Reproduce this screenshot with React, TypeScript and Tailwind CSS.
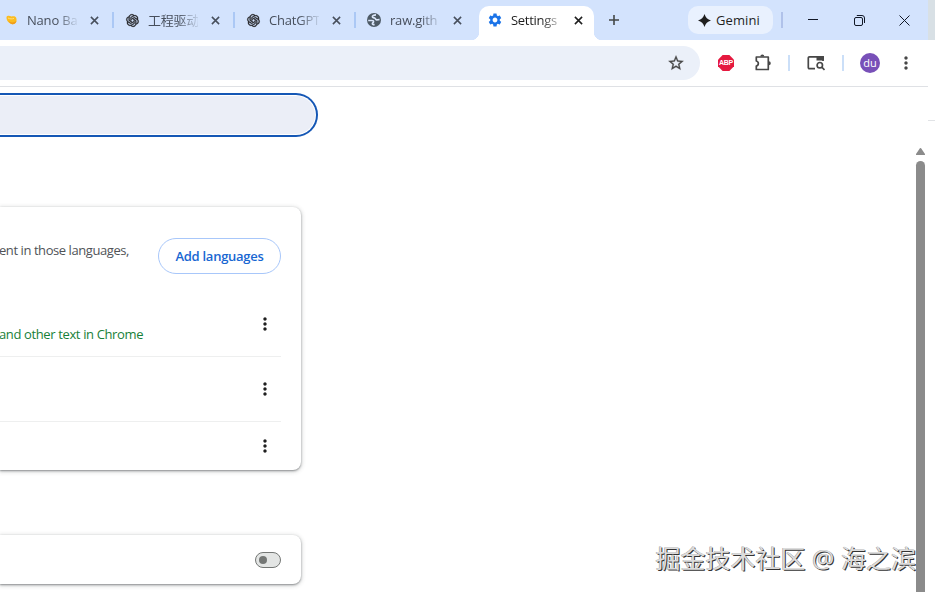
import type { ReactNode } from 'react';
import { MdMoreVert, MdSettings, MdStarOutline } from 'react-icons/md';
import { RiOpenaiFill } from 'react-icons/ri';

interface TabProps {
  icon: ReactNode;
  title: string;
  separator?: boolean;
}

function CloseIcon({ className }: { className?: string }) {
  return (
    <svg viewBox="0 0 10 10" className={className} fill="none" stroke="currentColor" strokeWidth="1.7">
      <path d="M1 1l8 8M9 1L1 9" />
    </svg>
  );
}

function BananaIcon() {
  return (
    <svg viewBox="0 0 14 14" className="w-3.5 h-3.5">
      <path d="M2.500 4C3.800 2 5.800 3 7.500 3.600 9 3.200 12 2.800 12.500 6c.4 3.200-1.500 5.500-4 5.200C5.500 10.800 2.200 8 2.500 4z" fill="#fbbc1f" />
      <path d="M4.500 7.800c2 2 5.200 2.300 8 0-.4 2.400-2 3.600-4.200 3.400C6.500 10.800 5.200 9.600 4.500 7.800z" fill="#f09c1b" />
      <path d="M4 5c2 1 4 1.200 6 .3" stroke="#ffe08a" strokeWidth=".9" fill="none" />
    </svg>
  );
}

function GlobeIcon() {
  return (
    <svg viewBox="0 0 14 14" className="w-3.5 h-3.5">
      <circle cx="7" cy="7" r="7" fill="#4d5a66" />
      <path
        d="M9 1.800c-2.200.1-3.800.8-3.600 2 .2 1.100 1.600.9 2.400 1.300.8.500.6 1.600 1.800 1.700 1.100.1 1.700-.2 2.900-.1"
        fill="none"
        stroke="#dbe7fb"
        strokeWidth="1.700"
      />
      <path d="M1.200 7.500h3.600c1.400 0 2 .7 1.600 1.600-.3.600-1 .6-1 1.300 0 .8.900 1.300 2.200 1.300" fill="none" stroke="#dbe7fb" strokeWidth="1.700" />
    </svg>
  );
}

function OpenAiIcon() {
  return <RiOpenaiFill className="w-[15px] h-[15px]" stroke="currentColor" strokeWidth="0.6" />;
}

function SidePanelSearchIcon() {
  return (
    <svg viewBox="0 0 18 16" className="w-[18px] h-4" fill="none" stroke="#474747" strokeWidth="1.7">
      <path d="M8 13.700H2.500c-.8 0-1.200-.4-1.200-1.200V3c0-.8.4-1.200 1.200-1.200H16V6" />
      <path d="M9.500 1h6.700c.5 0 .8.300.8.800V5.500H9.500z" fill="#474747" stroke="none" />
      <circle cx="12.800" cy="10.200" r="2.700" />
      <path d="M14.800 12.200l2.700 2.700" />
    </svg>
  );
}

function Tab({ icon, title, separator = true }: TabProps) {
  return (
    <div className="relative w-[121px] h-10 shrink-0 flex items-center pl-3 text-[#474f5c]">
      <span className="w-3.5 shrink-0 text-[#202124]">{icon}</span>
      <span className="ml-[9px] w-[50px] overflow-hidden whitespace-nowrap text-[13px] leading-5 tracking-[-0.2px] [mask-image:linear-gradient(to_right,black_60%,transparent_105%)]">
        {title}
      </span>
      <CloseIcon className="ml-[12.5px] w-[9px] h-[9px]" />
      {separator && <span className="absolute -right-px top-3 w-[2px] h-4 bg-[#abc8f5]" />}
    </div>
  );
}

function ActiveTab() {
  return (
    <div className="relative mt-1.5 ml-[3px] w-[115px] h-[34px] shrink-0 bg-white rounded-t-[10px] flex items-center pl-2 pb-[6px] text-[#1f1f1f]">
      <span className="absolute -left-2 bottom-0 w-2 h-2 bg-[radial-gradient(circle_at_0_0,transparent_8px,white_8.500px)]" />
      <span className="absolute -right-2 bottom-0 w-2 h-2 bg-[radial-gradient(circle_at_100%_0,transparent_8px,white_8.500px)]" />
      <MdSettings className="w-4 h-4 text-[#1a73e8]" />
      <span className="ml-2 w-[50px] whitespace-nowrap text-[13px] leading-5 tracking-[-0.3px] [mask-image:linear-gradient(to_right,black_60%,transparent_110%)]">
        Settings
      </span>
      <CloseIcon className="ml-[12.5px] w-[9px] h-[9px]" />
    </div>
  );
}

function TitleBar() {
  return (
    <div className="flex h-10 bg-[#d3e3fd] overflow-hidden">
      <div className="flex -ml-2">
        <Tab icon={<BananaIcon />} title="Nano Ba" />
        <Tab icon={<OpenAiIcon />} title="工程驱动" />
        <Tab icon={<OpenAiIcon />} title="ChatGPT" />
        <Tab icon={<GlobeIcon />} title="raw.gith" separator={false} />
      </div>
      <ActiveTab />
      <svg viewBox="0 0 12 12" className="w-3 h-3 mt-3.5 ml-3.5" stroke="#444746" strokeWidth="1.6">
        <path d="M6 1v10M1 6h10" />
      </svg>
      <div className="ml-auto flex items-center">
        <div className="w-[85px] h-7 flex items-center pl-2.5 rounded-[10px] bg-[#e9f1fe] text-[13px] text-[#1f1f1f]">
          <svg viewBox="0 0 14 14" className="w-[13px] h-[13px]" fill="#1f1f1f">
            <path d="M7 0C8 3.600 10.400 6 14 7 10.400 8 8 10.400 7 14 6 10.400 3.600 8 0 7 3.600 6 6 3.600 7 0z" />
          </svg>
          <span className="ml-[5px] mt-px tracking-[0.1px]">Gemini</span>
        </div>
        <span className="ml-2 w-[2px] h-4 bg-[#b0c2ea]" />
        <svg viewBox="0 0 10 10" className="ml-[25px] w-2.5 h-2.5" stroke="#111827">
          <path d="M0 4.500h10" />
        </svg>
        <svg viewBox="0 0 11 11" className="ml-9 w-[11px] h-[11px]" fill="none" stroke="#111827">
          <rect x=".5" y="2.500" width="8" height="8" rx="1.500" />
          <path d="M2.800 .5h5.200a2.500 2.500 0 0 1 2.500 2.500v5" />
        </svg>
        <svg viewBox="0 0 11 11" className="ml-[34px] mr-[18px] w-[11px] h-[11px]" fill="none" stroke="#111827">
          <path d="M.5 .5l10 10M10.500 .5l-10 10" />
        </svg>
      </div>
    </div>
  );
}

function Toolbar() {
  return (
    <div className="h-[47px] pt-1.5 flex items-start bg-white border-b border-[#dfe1e5]">
      <div className="w-[700px] h-[34px] shrink-0 flex items-center justify-end pr-[15px] rounded-r-full bg-[#ebf0f9]">
        <MdStarOutline className="w-[18px] h-[18px] text-[#474747]" stroke="currentColor" strokeWidth="0.4" />
      </div>
      <div className="flex flex-1 items-center h-[34px]">
        <span className="ml-[18px] w-4 h-4 shrink-0 flex items-center justify-center bg-[#e5193f] [clip-path:polygon(29%_0,71%_0,100%_29%,100%_71%,71%_100%,29%_100%,0_71%,0_29%)] font-['Liberation_Sans',sans-serif] text-[7px] tracking-[-0.2px] font-bold text-white">
          ABP
        </span>
        <svg viewBox="0 0 18 18" className="ml-5 w-[18px] h-[18px]" fill="none" stroke="#474747" strokeWidth="1.700">
          <path d="M2.300 3h12v12.500h-12V12c2.700-.6 2.700-4.400 0-5z" strokeLinejoin="round" />
          <path d="M6.300 2.500a2 2 0 0 1 4 0zM14.800 7.300a2 2 0 0 1 0 4z" fill="#474747" stroke="none" />
        </svg>
        <span className="ml-4 w-[2px] h-4 bg-[#cbdff8]" />
        <span className="ml-[17px]">
          <SidePanelSearchIcon />
        </span>
        <span className="ml-[17px] w-[2px] h-4 bg-[#cbdff8]" />
        <span className="ml-4 w-5 h-5 rounded-full bg-[#7850b8] text-white text-[11px] flex items-center justify-center">
          du
        </span>
        <MdMoreVert className="ml-4 w-5 h-5 text-[#474747]" />
      </div>
    </div>
  );
}

function LanguageRow({ text, className }: { text?: string; className: string }) {
  return (
    <div className={`flex justify-between ${className}`}>
      <span className="mt-2.5 -ml-px text-[13px] leading-5 tracking-[-0.37px] whitespace-nowrap text-[#188038]">{text}</span>
      <MdMoreVert className="w-5 h-5 mr-1.5 text-[#1f1f1f]" />
    </div>
  );
}

function LanguagesCard() {
  return (
    <section className="mt-[70px] w-[301px] h-[263px] pr-5 rounded-r-lg bg-white shadow-[0_1px_2px_rgba(60,64,67,0.5),0_1px_4px_1px_rgba(60,64,67,0.2)]">
      <div className="pt-[31px] h-[92px] flex justify-between">
        <p className="mt-0.5 -ml-px text-[13px] leading-5 tracking-[-0.43px] whitespace-nowrap text-[#505357]">
          ent in those languages,
        </p>
        <button className="w-[123px] h-9 pt-0.5 rounded-full border border-[#a8c7fa] text-[13px] font-semibold tracking-[-0.27px] text-[#1967d2]">
          Add languages
        </button>
      </div>
      <LanguageRow text="and other text in Chrome" className="h-[57px] pt-[15px]" />
      <LanguageRow className="h-[65px] pt-[22px] border-t border-[#eeefef]" />
      <LanguageRow className="h-12 pt-3.5 border-t border-[#eeefef]" />
    </section>
  );
}

export default function App() {
  return (
    <div className="relative w-[935px] h-[592px] flex overflow-hidden bg-white font-['Open_Sans','Noto_Sans_CJK_SC',sans-serif]">
      <div className="w-[928px] shrink-0">
        <TitleBar />
        <Toolbar />
        <div className="flex justify-between h-[505px]">
          <main>
            <div className="mt-1.5 w-[318px] h-11 py-px pr-px rounded-r-full border-2 border-l-0 border-[#1557b5]">
              <div className="h-full rounded-r-full bg-[#ebeef7]" />
            </div>
            <LanguagesCard />
            <section className="mt-[65px] w-[301px] h-[49px] pr-5 flex items-center justify-end rounded-r-lg bg-white shadow-[0_1px_2px_rgba(60,64,67,0.5),0_1px_4px_1px_rgba(60,64,67,0.2)]">
              <span className="w-[26px] h-4 px-[3px] flex items-center rounded-full border border-[#747775] bg-[#e3e5e4]">
                <span className="w-2 h-2 rounded-full bg-[#747775]" />
              </span>
            </section>
          </main>
          <div className="relative z-10 w-[9px] mr-[3px] pt-[61px]">
            <svg viewBox="0 0 9 7" className="w-[9px] h-[7px]" fill="#8b8b8b">
              <path d="M4.500 0C5 0 5.300.4 5.600 1L9 6c.2.600 0 1-.6 1H.6C0 7-.2 6.600 0 6l3.400-5C3.700.400 4 0 4.500 0z" />
            </svg>
            <div className="mt-1.5 h-[440px] rounded-full bg-[#8b8b8b]" />
          </div>
        </div>
      </div>
      <div className="w-[7px]">
        <div className="h-10 bg-[#d8e0e5]" />
        <div className="h-[81px] border-b border-[#e1e3e6]" />
      </div>
      {/* Watermark */}
      <div className="absolute left-[655.5px] top-[540px] text-[25px] leading-9 whitespace-nowrap text-[#dcdcdc] [text-shadow:1px_1px_0_#333,-0.5px_-0.5px_0_#999]">
        掘金技术社区 @ 海之滨
      </div>
    </div>
  );
}
